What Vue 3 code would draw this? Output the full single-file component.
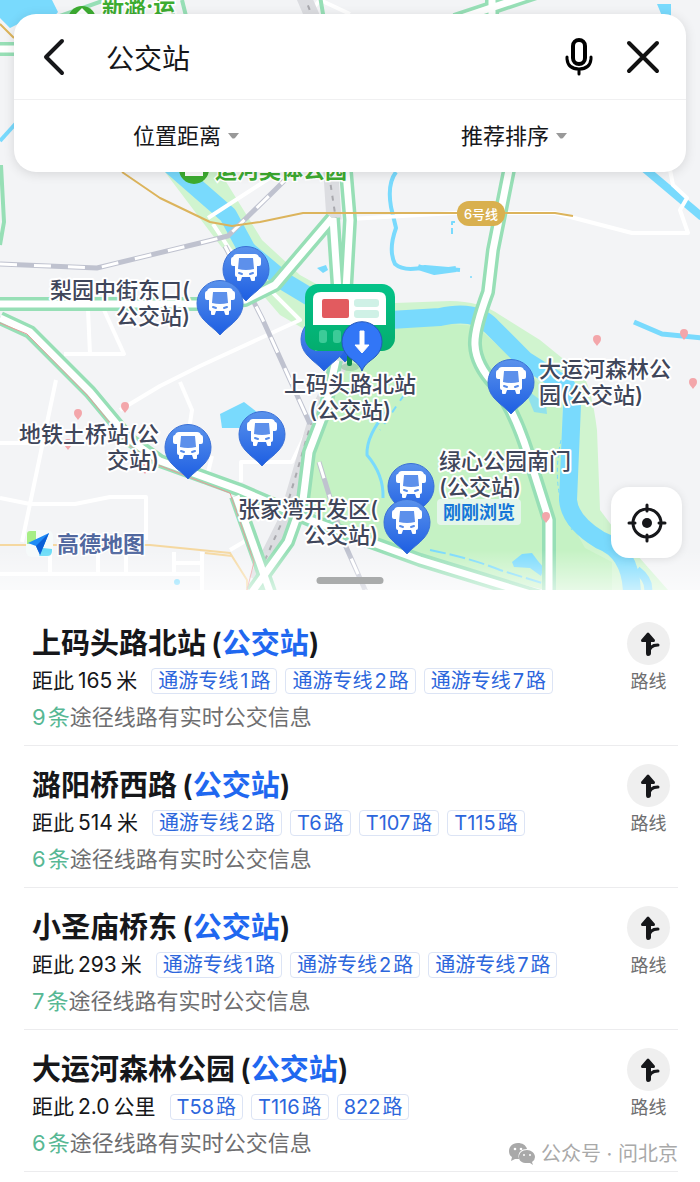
<script setup>
import { ref } from 'vue'

const keyword = ref('公交站')
const distance = ref('位置距离')
const order = ref('推荐排序')

const pins = [
    { x: 246, y: 269 },
    { x: 220, y: 303 },
    { x: 345, y: 330 },
    { x: 324, y: 339 },
    { x: 511, y: 382 },
    { x: 262, y: 434 },
    { x: 188, y: 447 },
    { x: 411, y: 486 },
    { x: 407, y: 522 }
]

const labels = [
    { x: 190, y: 298, anchor: 'end', lines: ['梨园中街东口(', '公交站)'] },
    { x: 350, y: 392, anchor: 'middle', lines: ['上码头路北站', '(公交站)'] },
    { x: 539, y: 377, anchor: 'start', lines: ['大运河森林公', '园(公交站)'] },
    { x: 159, y: 442, anchor: 'end', lines: ['地铁土桥站(公', '交站)'] },
    { x: 439, y: 469, anchor: 'start', lines: ['绿心公园南门', '(公交站)'] },
    { x: 378, y: 517, anchor: 'end', lines: ['张家湾开发区(', '公交站)'] }
]

const dots = [
    { x: 78, y: 414 },
    { x: 125, y: 407 },
    { x: 597, y: 340 },
    { x: 684, y: 334 },
    { x: 693, y: 383 },
    { x: 546, y: 517 },
    { x: 68, y: 444 },
    { x: 145, y: 468 }
]

const stations = [
    { name: '上码头路北站', distance: '距此165米', lines: ['通游专线1路', '通游专线2路', '通游专线7路'], live: 9 },
    { name: '潞阳桥西路', distance: '距此514米', lines: ['通游专线2路', 'T6路', 'T107路', 'T115路'], live: 6 },
    { name: '小圣庙桥东', distance: '距此293米', lines: ['通游专线1路', '通游专线2路', '通游专线7路'], live: 7 },
    { name: '大运河森林公园', distance: '距此2.0公里', lines: ['T58路', 'T116路', '822路'], live: 6 }
]

// latin and digits get a little air next to the chinese text
const split = (text) => {
    return text.split(/([A-Z0-9.]+)/).filter(Boolean).map((value) => ({
        value,
        latin: /^[A-Z0-9.]+$/.test(value)
    }))
}
</script>

<template>
  <div class="page">
    <section class="map">
      <svg class="map-canvas" viewBox="0 0 700 590" role="img" aria-label="地图">
        <defs>
          <linearGradient id="pinFill" x1="0" y1="0" x2="0" y2="1">
            <stop offset="0" stop-color="#5a92ec" />
            <stop offset="1" stop-color="#1d5ee2" />
          </linearGradient>
          <linearGradient id="signFill" x1="0" y1="0" x2="0" y2="1">
            <stop offset="0" stop-color="#04c389" />
            <stop offset="1" stop-color="#04ad6e" />
          </linearGradient>
          <linearGradient id="fade" x1="0" y1="0" x2="0" y2="1">
            <stop offset="0" stop-color="#fff" stop-opacity="0" />
            <stop offset="1" stop-color="#fff" stop-opacity="0.6" />
          </linearGradient>
          <g id="pin">
            <path d="M0 32C-5 26-12 22-17 16A23 23 0 1 1 17 16C12 22 5 26 0 32Z" fill="url(#pinFill)" stroke="#3a70d6" stroke-width="1" />
            <path d="M-9-15H9Q12-15 13-12Q15-12 15-9V-5Q15-3 13-3H11V6Q11 8 9 8V11Q9 12 8 12H6Q5 12 5 11L4 8H-4L-5 11Q-5 12-6 12H-8Q-9 12-9 11V8Q-11 8-11 6V-3H-13Q-15-3-15-5V-9Q-15-12-13-12Q-12-15-9-15Z" fill="#fff" />
            <path d="M-7-11H7L8 0Q0 2-8 0Z" fill="#5d90eb" />
            <path d="M-7 4l3 1M7 4l-3 1" stroke="#568bea" stroke-width="2" stroke-linecap="round" />
          </g>
        </defs>

        <rect width="700" height="590" fill="#f3f4f6" />

        <!-- parks -->
        <path d="M165 172H220L262 240L300 275L345 300L395 303L450 301Q480 301 500 315L540 340L583 375Q592 390 597 430L600 510L615 530L668 590H545L420 558L306 510L308 455L340 350L280 315L220 245Z" fill="#d0f4cf" />
        <path d="M340 345L395 326L450 324L476 326L540 384L562 400L561 505L585 548L612 562V590H545L420 558L306 510L308 455L325 400Z" fill="#c5f2c4" />

        <!-- water -->
        <g fill="none" stroke="#79dafd" stroke-linejoin="round">
          <path d="M165 160L197 188L228 215L247 250L285 282L330 309L390 320L440 317Q475 309 491 326L525 360L560 382Q571 386 572 405L568 500Q570 522 600 540Q632 552 632 595" stroke-width="18" />
          <path d="M396 172Q387 184 391 207L396 228Q388 250 395 264Q404 272 425 267L460 270" stroke-width="4" />
          <path d="M418 267L434 272L456 269" stroke-width="6" />
          <path d="M455 222H452V235" stroke-width="2" stroke-dasharray="6 3" />
          <path d="M645 169L702 217" stroke-width="8" />
          <path d="M634 322L662 334L702 338" stroke-width="5" />
          <path d="M388 410Q366 435 367 455Q384 475 383 498" stroke-width="3" />
          <path d="M0 141L18 121" stroke-width="4" />
          <path d="M404 395L380 430" stroke-width="2" stroke-dasharray="7 7" />
          <path d="M430 550Q470 558 500 570L545 584" stroke-width="2" stroke-dasharray="16 4" />
          <path d="M561 440Q550 490 572 530" stroke-width="1" stroke-dasharray="4 3" />
          <path d="M637 570Q650 580 648 592" stroke-width="8" />
        </g>
        <g fill="#79dafd">
          <path d="M0 0H52L58 12L48 24H18L10 28L0 18Z" />
          <path d="M657 4H671V16H662Z" />
          <path d="M220 414L244 402L257 412V428H222Z" />
          <path d="M317 268L326 265L328 270L323 273Z" />
          <path d="M512 562L522 554L532 553L538 561L544 568L541 576L530 568L514 567Z" />
          <path d="M524 388L546 404L547 414L534 412Z" opacity="0.7" />
          <circle cx="471" cy="277" r="1" />
          <circle cx="177" cy="582" r="3" />
        </g>

        <!-- small roads -->
        <g fill="none" stroke="#fff" stroke-width="4" stroke-linejoin="round">
          <path d="M208 218L262 183L282 170" />
          <path d="M213 224L230 250L300 320L200 366L160 386L120 410" />
          <path d="M350 219L455 213L555 213L632 233H688L680 210L687 198L673 185L670 170" />
          <path d="M88 310L90 354M104 310L124 354H64" />
          <path d="M56 380L22 542M0 443H45M0 498L30 504H75L110 497H146V540" />
          <path d="M180 382L192 410L189 430M212 456L205 485" />
          <path d="M0 574H202M50 545V574M98 545V574M126 545V574M174 552V574M174 563H200M202 552V600" />
          <path d="M241 482V462H292L310 425" />
          <path d="M230 550L247 540" />
          <path d="M320 0L350 14M270 60L320 0" />
        </g>
        <g fill="none" stroke="#f5d8a0" stroke-width="2">
          <path d="M0 545H150L230 553L247 580V592" />
          <path d="M205 553L232 556" />
        </g>

        <!-- railways -->
        <g fill="none">
          <path d="M303 -5L318 30M330 160L334 220M342 360L318 412L300 472L286 520L256 580" stroke="#dcdde1" stroke-width="15" />
          <path d="M329 174L336 220M304 -5L312 16M312 420L296 475L282 522L256 580M318 425L304 475L290 530L270 560" stroke="#a9a9ae" stroke-width="2" stroke-dasharray="5 6" />
          <path d="M0 264L97 268L200 243L228 236L275 190L295 170M225 246L262 318L310 424M319 462L343 540L366 592" stroke="#bfc2cf" stroke-width="5" />
          <path d="M0 264L97 268L200 243L228 236L275 190L295 170M225 246L262 318L310 424M319 462L343 540L366 592" stroke="#fff" stroke-width="3" stroke-dasharray="17 17" />
        </g>

        <!-- main roads -->
        <g fill="none" stroke-linejoin="round">
          <g stroke="#97dfb6" stroke-width="14">
            <path d="M0 304H200L245 300L275 285L332 218" />
            <path d="M345 160L350 220L346 290M333 218L338 292" />
            <path d="M0 318L30 332L90 392L130 440L160 461L240 490L310 520L420 560L550 600" />
            <path d="M336 360L325 410L309 452L303 500L288 542L252 592" />
            <path d="M236 496L270 592" />
            <path d="M510 165L493 250L488 292Q474 330 475 345Q476 365 495 385Q515 410 530 460L549 520V595" />
            <path d="M455 20L545 -10M492 -4V16" />
            <path d="M0 49H20" />
            <path d="M1 165L4 222L0 245" stroke-width="4" />
            <path d="M182 0L187 20M60 16L105 0M320 -4L324 20" stroke-width="4" />
          </g>
          <g stroke="#fff" stroke-width="7">
            <path d="M0 304H200L245 300L275 285L332 218" />
            <path d="M345 160L350 220L346 290M333 218L338 292" />
            <path d="M0 318L30 332L90 392L130 440L160 461L240 490L310 520L420 560L550 600" />
            <path d="M336 360L325 410L309 452L303 500L288 542L252 592" />
            <path d="M236 496L270 592" />
            <path d="M510 165L493 250L488 292Q474 330 475 345Q476 365 495 385Q515 410 530 460L549 520V595" />
            <path d="M455 20L545 -10M492 -4V16" />
            <path d="M0 49H20" />
          </g>
          <path d="M0 323L27 334L88 396L127 444L158 465L230 493L254 562L247 590" stroke="#e79a9a" stroke-width="1" />
          <path d="M0 24L14 38M122 172L160 198L210 222L232 226L260 222L303 213H555L573 216" stroke="#dcb45c" stroke-width="2" />
        </g>

        <!-- metro badge -->
        <rect x="457" y="201" width="48" height="25" rx="12" fill="#d9b04f" />
        <text class="metro" x="481" y="219" text-anchor="middle">6号线</text>

        <!-- park names -->
        <circle cx="82" cy="20" r="14" fill="#3dac31" />
        <path d="M76 14l6-6l6 6z" fill="#fff" />
        <text class="park" x="102" y="14">新潞·运</text>
        <circle cx="194" cy="169" r="15" fill="#3dac31" />
        <path d="M185 171h18v5h-18z" fill="#fff" />
        <text class="park" x="215" y="178">运河奥体公园</text>

        <path
          v-for="dot in dots"
          :key="dot.x"
          d="M0 6C-2 3-4 2-4-1A4 4 0 1 1 4-1C4 2 2 3 0 6Z"
          fill="#f3a6aa"
          :transform="`translate(${dot.x} ${dot.y})`"
        />

        <use v-for="(pin, i) in pins" :key="i" href="#pin" :transform="`translate(${pin.x} ${pin.y})`" />

        <!-- selected stop -->
        <ellipse cx="350" cy="367" rx="9" ry="4" fill="#8fc79a" opacity="0.6" />
        <rect x="347" y="345" width="5" height="21" rx="2" fill="#0b8a4a" />
        <rect x="305" y="284" width="90" height="67" rx="13" fill="url(#signFill)" />
        <path d="M321 292H379Q386 292 386 299V325H313V299Q313 292 321 292Z" fill="#fff" />
        <rect x="322" y="299" width="27" height="19" rx="2" fill="#e25b5f" />
        <rect x="354" y="299" width="25" height="8" rx="3" fill="#cff1e6" />
        <rect x="354" y="310" width="25" height="8" rx="3" fill="#cff1e6" />
        <rect x="319" y="330" width="8" height="13" rx="3" fill="#3ccb98" />
        <rect x="333" y="330" width="8" height="13" rx="3" fill="#3ccb98" />
        <path d="M362 371C359 363 353 361 348 356A20 20 0 1 1 376 356C371 361 365 363 362 371Z" fill="#3276f6" stroke="#2458bb" stroke-width="1" />
        <path d="M360 331H364V345H369L362 353L355 345H360Z" fill="#fff" stroke="#fff" stroke-linejoin="round" />

        <text
          v-for="label in labels"
          :key="label.lines[0]"
          class="label"
          :text-anchor="label.anchor"
        >
          <tspan v-for="(line, i) in label.lines" :key="i" :x="label.x" :y="label.y + i * 26">{{ line }}</tspan>
        </text>

        <rect x="437" y="499" width="84" height="26" rx="4" fill="#e4f6ea" />
        <text class="recent" x="443" y="519">刚刚浏览</text>

        <!-- map logo -->
        <rect x="26" y="530" width="27" height="27" rx="6" fill="#f5fafa" />
        <path d="M27 540V534Q27 531 30 531H36V543L27 544Z" fill="#a7ee85" />
        <path d="M39 556L43 548L52 549V551Q52 556 47 556Z" fill="#6bdcf8" />
        <path d="M49 533L28 543L36 546L40 555Z" fill="#1c8bf6" />
        <path d="M49 533L36 546L40 555Z" fill="#0b5fd6" />
        <text class="brand" x="57" y="552">高德地图</text>

        <rect y="550" width="700" height="40" fill="url(#fade)" />
      </svg>

      <div class="search-card">
        <form class="search-row" @submit.prevent>
          <button type="button" class="icon-btn" aria-label="返回">
            <svg width="24" height="40" viewBox="0 0 24 40"><path d="M20 4L4 20L20 36" fill="none" stroke="#16171a" stroke-width="4" stroke-linecap="round" stroke-linejoin="round" /></svg>
          </button>
          <input v-model="keyword" class="search-input" type="text" aria-label="搜索">
          <button type="button" class="icon-btn" aria-label="语音">
            <svg width="30" height="40" viewBox="0 0 30 40">
              <g fill="none" stroke="#000" stroke-width="4" stroke-linecap="round">
                <rect x="9" y="3" width="12" height="24" rx="6" />
                <path d="M3 20V22Q4 32 15 32Q26 32 27 22V20M15 32V37" stroke-width="3" />
              </g>
            </svg>
          </button>
          <button type="button" class="icon-btn close" aria-label="关闭">
            <svg width="34" height="34" viewBox="0 0 34 34"><path d="M3 3L31 31M31 3L3 31" stroke="#111" stroke-width="4" stroke-linecap="round" /></svg>
          </button>
        </form>
        <div class="filters">
          <div class="filter">
            <select v-model="distance" aria-label="位置距离">
              <option>位置距离</option>
            </select>
            <svg width="11" height="6" viewBox="0 0 11 6"><path d="M0 0H11L7 5Q5 6 4 5Z" fill="#999" /></svg>
          </div>
          <div class="filter">
            <select v-model="order" aria-label="推荐排序">
              <option>推荐排序</option>
            </select>
            <svg width="11" height="6" viewBox="0 0 11 6"><path d="M0 0H11L7 5Q5 6 4 5Z" fill="#999" /></svg>
          </div>
        </div>
      </div>

      <button type="button" class="locate" aria-label="定位">
        <svg width="40" height="40" viewBox="0 0 40 40">
          <circle cx="20" cy="20" r="14" fill="none" stroke="#16171a" stroke-width="3" />
          <circle cx="20" cy="20" r="5" fill="#16171a" />
          <path d="M20 2V8M20 32V38M2 20H8M32 20H38" stroke="#16171a" stroke-width="3" stroke-linecap="round" />
        </svg>
      </button>
      <div class="handle"></div>
    </section>

    <ul class="stations">
      <li v-for="station in stations" :key="station.name" class="station">
        <div class="info">
          <h2>{{ station.name }}<span class="paren">(</span><em>公交站</em>)</h2>
          <div class="meta">
            <span class="distance"><span v-for="(part, i) in split(station.distance)" :key="i" :class="{ latin: part.latin }">{{ part.value }}</span></span>
            <a v-for="line in station.lines" :key="line" href="#" class="tag"><span v-for="(part, i) in split(line)" :key="i" :class="{ latin: part.latin }">{{ part.value }}</span></a>
          </div>
          <p class="live"><b><span class="latin">{{ station.live }}</span>条</b>途径线路有实时公交信息</p>
        </div>
        <button type="button" class="route">
          <span class="route-icon">
            <svg width="22" height="26" viewBox="0 0 22 26">
              <path d="M9 2Q10 1 11 2L17 9Q17 11 16 11H13V22Q13 25 10 25Q8 25 8 22V11H4Q3 11 3 9Z" fill="#16171a" />
              <path d="M11 22Q11 14 20 14" fill="none" stroke="#16171a" stroke-width="3" stroke-linecap="round" />
            </svg>
          </span>
          路线
        </button>
      </li>
    </ul>

    <div class="watermark">
      <svg width="28" height="24" viewBox="0 0 28 24">
        <path d="M10 1C4 1 1 5 1 9C1 12 2 14 4 15L3 19L7 17L11 17C9 10 14 7 19 7C18 3 14 1 10 1Z" fill="#a9a9a9" />
        <path d="M19 8C14 8 11 11 11 15C11 19 14 21 19 21L22 21L25 23L24 20Q27 18 27 15C27 11 23 8 19 8Z" fill="#a9a9a9" />
        <g fill="#fff"><circle cx="7" cy="7" r="1.300" /><circle cx="13" cy="7" r="1.300" /><circle cx="16" cy="13" r="1" /><circle cx="22" cy="13" r="1" /></g>
      </svg>
      公众号 · 问北京
    </div>
  </div>
</template>

<style>
body {
  margin: 0;
  background: #fff;
}
</style>

<style scoped>
.page {
  position: relative;
  color: #16171a;
  background: #fff;
  font-family: Inter, "Noto Sans CJK SC", sans-serif;
}

button,
input,
select {
  padding: 0;
  border: 0;
  background: none;
  color: inherit;
  font-family: inherit;
}

button {
  cursor: pointer;
}

svg {
  display: block;
}

.map {
  position: relative;
}

.map-canvas {
  width: 100%;
  height: auto;
}

.label {
  font-size: 22px;
  font-weight: 500;
  fill: #3f465a;
  stroke: #fff;
  stroke-width: 4px;
  stroke-linejoin: round;
  paint-order: stroke;
}

.park {
  font-size: 22px;
  font-weight: 700;
  fill: #3dac31;
  stroke: #fff;
  stroke-width: 3px;
  paint-order: stroke;
}

.metro {
  font-size: 13px;
  font-weight: 500;
  fill: #fff;
}

.recent {
  font-size: 18px;
  font-weight: 700;
  fill: #1677d8;
}

.brand {
  font-size: 22px;
  font-weight: 700;
  fill: #51689f;
  stroke: #fff;
  stroke-width: 3px;
  paint-order: stroke;
}

/* search card */
.search-card {
  position: absolute;
  top: 14px;
  left: 14px;
  right: 14px;
  border-radius: 22px;
  background: #fff;
  box-shadow: 0 2px 12px rgba(0, 0, 0, 0.12);
}

.search-row {
  display: flex;
  align-items: center;
  height: 86px;
  padding: 0 26px 0 28px;
  box-sizing: border-box;
  border-bottom: 1px solid #f0f0f1;
}

.search-input {
  flex: 1;
  min-width: 0;
  margin: 0 20px 0 40px;
  outline: none;
  font-size: 28px;
}

.close {
  margin-left: 32px;
}

.filters {
  display: grid;
  grid-template-columns: 1fr 1fr;
  height: 72px;
  padding: 0 8px;
}

.filter {
  display: flex;
  align-items: center;
  justify-content: center;
  gap: 6px;
}

.filter select {
  appearance: none;
  outline: none;
  font-size: 22px;
}

.locate {
  position: absolute;
  right: 18px;
  bottom: 32px;
  display: flex;
  align-items: center;
  justify-content: center;
  width: 71px;
  height: 71px;
  border-radius: 18px;
  background: #fff;
  box-shadow: 0 1px 8px rgba(0, 0, 0, 0.1);
}

.handle {
  position: absolute;
  bottom: 6px;
  left: 50%;
  width: 67px;
  height: 7px;
  border-radius: 4px;
  background: #a9abab;
  transform: translateX(-50%);
}

/* result list */
.stations {
  margin: 0;
  padding: 14px 22px 0 24px;
  list-style: none;
}

.station {
  display: flex;
  justify-content: space-between;
  height: 142px;
  padding: 18px 8px 0 8px;
  box-sizing: border-box;
  border-bottom: 1px solid #ececee;
}

.info {
  min-width: 0;
}

h2 {
  margin: 0;
  font-size: 29px;
  font-weight: 600;
  line-height: 44px;
}

h2 em {
  color: #1f68f0;
  font-style: normal;
}

.paren {
  margin-left: 5px;
}

.meta {
  display: flex;
  align-items: center;
  gap: 8px;
  height: 26px;
  margin-top: 2px;
  white-space: nowrap;
}

.distance {
  margin-right: 6px;
  font-size: 21px;
  line-height: 24px;
}

.distance .latin {
  margin: 0 4px;
}

.tag {
  padding: 0 6px;
  border: 1px solid #dce4f5;
  border-radius: 4px;
  color: #2c66dc;
  font-size: 20px;
  line-height: 24px;
  text-decoration: none;
}

.latin {
  margin: 0 2px;
}

.tag .latin:first-child,
.live .latin {
  margin-left: 0;
}

.live {
  margin: 8px 0 0;
  color: #6e6e70;
  font-size: 22px;
  line-height: 30px;
}

.live b {
  color: #57b894;
  font-weight: 400;
}

.route {
  display: flex;
  flex-direction: column;
  align-items: center;
  align-self: flex-start;
  gap: 3px;
  color: #6e6e70;
  font-size: 18px;
  line-height: 28px;
}

.route-icon {
  display: flex;
  align-items: center;
  justify-content: center;
  width: 43px;
  height: 43px;
  border-radius: 50%;
  background: #efefef;
}

.watermark {
  position: absolute;
  right: 22px;
  bottom: 4px;
  display: flex;
  align-items: center;
  gap: 5px;
  color: #a9a9a9;
  font-size: 20px;
  line-height: 28px;
}
</style>
